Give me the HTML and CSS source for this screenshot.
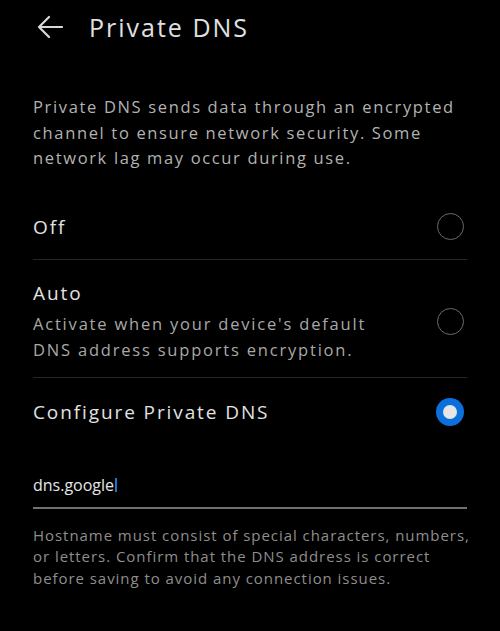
FILE: index.html
```html
<!DOCTYPE html>
<html>
<head>
    <meta charset="utf-8">
    <title>Private DNS</title>
    <link rel="stylesheet" href="styles.css">
</head>
<body>
    <div class="header">
        <svg class="back" width="26" height="24" viewBox="0 0 26 24">
            <path d="M25 12H2M12 2L2 12l10 10" fill="none" stroke="#d8d8d8" stroke-width="2.2" stroke-linecap="round" stroke-linejoin="round"/>
        </svg>
        <h1 class="title">Private DNS</h1>
    </div>

    <p class="intro">Private DNS sends data through an encrypted channel to ensure network security. Some network lag may occur during use.</p>

    <div class="options">
        <div class="option option-off">
            <div class="option-text">
                <div class="option-title">Off</div>
            </div>
            <span class="radio"></span>
        </div>
        <div class="option option-auto">
            <div class="option-text">
                <div class="option-title">Auto</div>
                <div class="option-sub">Activate when your device's default DNS address supports encryption.</div>
            </div>
            <span class="radio"></span>
        </div>
        <div class="option option-custom">
            <div class="option-text">
                <div class="option-title">Configure Private DNS</div>
            </div>
            <span class="radio checked"></span>
        </div>
    </div>

    <div class="field">
        <span class="field-value">dns.google</span><span class="caret"></span>
    </div>

    <p class="help">Hostname must consist of special characters, numbers, or letters. Confirm that the DNS address is correct before saving to avoid any connection issues.</p>
</body>
</html>
```

FILE: styles.css
```css
html {
    background: #000;
}
body {
    margin: 0;
    background: #000;
    font-family: "Open Sans", "DejaVu Sans", sans-serif;
    color: #e2e2e2;
}

.header {
    display: flex;
    align-items: center;
    height: 54px;
    padding-left: 37px;
    gap: 26px;
}
.back {
    display: block;
}
.title {
    margin: 0;
    font-size: 25px;
    font-weight: normal;
    color: #e0e0e0;
    letter-spacing: 2px;
}

.intro {
    margin: 0;
    padding: 40px 33px 24px;
    font-size: 16.5px;
    line-height: 25.5px;
    color: #b2b2b2;
    letter-spacing: 1.65px;
}

.options {
    margin: 0 33px;
}
.option {
    display: flex;
    align-items: center;
    justify-content: space-between;
    border-bottom: 1px solid #262626;
}
.option:last-child {
    border-bottom: none;
}
.option-off {
    height: 64px;
}
.option-auto {
    padding: 20px 0 14px;
}
.option-custom {
    height: 68px;
}
.option-text {
    width: 360px;
}
.option-title {
    font-size: 19px;
    line-height: 26px;
    color: #e2e2e2;
    letter-spacing: 1.9px;
}
.option-sub {
    margin-top: 5px;
    font-size: 16.5px;
    line-height: 26px;
    color: #a8a8a8;
    letter-spacing: 1.8px;
}

.radio {
    width: 25px;
    height: 25px;
    margin-right: 3px;
    border: 1.5px solid #6c6c6c;
    border-radius: 50%;
    flex-shrink: 0;
}
.radio.checked {
    width: 28px;
    height: 28px;
    border: none;
    background: #0b6fdc;
    position: relative;
}
.radio.checked::after {
    content: "";
    position: absolute;
    left: 7px;
    top: 7px;
    width: 14px;
    height: 14px;
    border-radius: 50%;
    background: #e6e6e6;
}

.field {
    display: flex;
    align-items: center;
    margin: 0 33px;
    padding: 27px 0 10px;
    border-bottom: 2px solid #707070;
}
.field-value {
    font-size: 16px;
    line-height: 24px;
    color: #e6e6e6;
}
.caret {
    width: 2px;
    height: 14px;
    margin-left: 1px;
    background: #1f6fd6;
}

.help {
    margin: 16px 28px 0 33px;
    font-size: 15px;
    line-height: 21.5px;
    color: #8e8e8e;
    letter-spacing: 0.95px;
}
```
